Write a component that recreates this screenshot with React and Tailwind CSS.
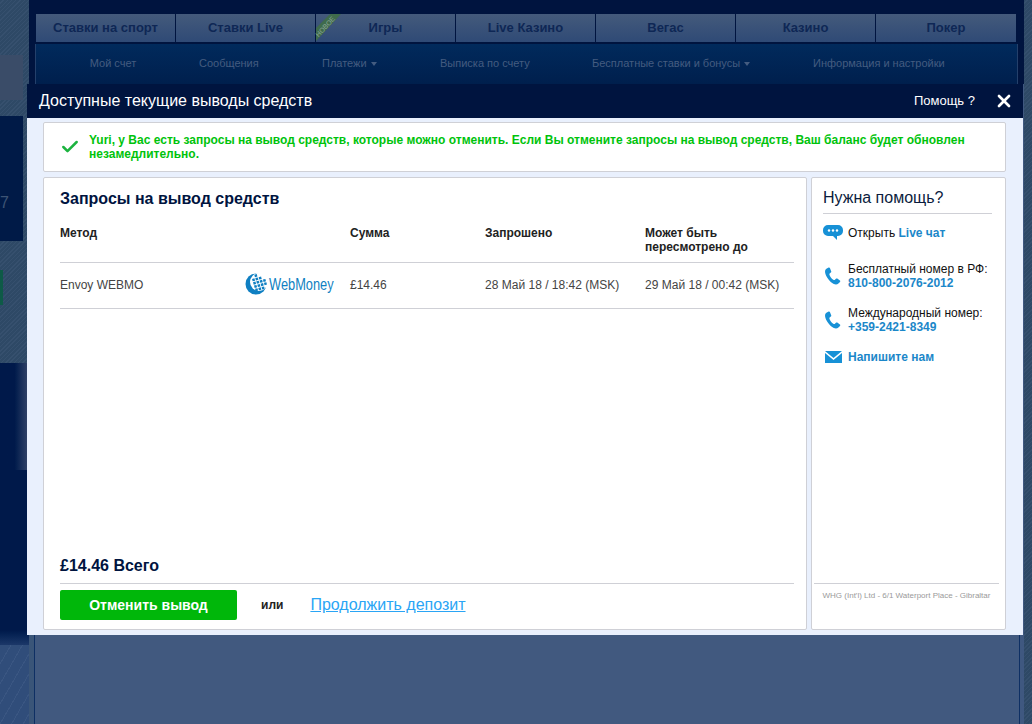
import { Check, X } from 'lucide-react';

const TABS = ['Ставки на спорт', 'Ставки Live', 'Игры', 'Live Казино', 'Вегас', 'Казино', 'Покер'];

const texture = 'bg-[repeating-linear-gradient(135deg,#2e4966_0px,#2e4966_2px,#36506e_2px,#36506e_3px)]';

function SubLink({ children, caret }) {
  return (
    <span className="flex items-center gap-1 text-[11px] text-[#445c80]">
      {children}
      {caret && <span className="mt-px border-x-[3.5px] border-t-[4px] border-x-transparent border-t-[#445c80]" />}
    </span>
  );
}

function LeftEdge() {
  return (
    <div className={`flex w-[29px] flex-col ${texture}`}>
      <div className="mt-[55px] h-[45px] w-[23px] bg-[#3a4c68]" />
      <div className="mt-[16px] flex h-[125px] w-[23px] items-start bg-[#001a47] pt-[78px] text-[16px] leading-[18px] text-[#3d5475]">7</div>
      <div className="h-[122px] pt-[29px]">
        <div className="h-[35px] w-[3px] bg-[#0e5a47]" />
      </div>
      <div className="h-[107px] bg-gradient-to-r from-[#00194a] via-[#00194a] to-[#36466a]" />
      <div className="h-[160px] bg-[#00194a]" />
      <div className="h-[15px] bg-gradient-to-b from-[#00194a] to-[#1c3869]" />
      <div className="flex-1 bg-[repeating-linear-gradient(120deg,#304d7a_0px,#304d7a_9px,#3a5682_9px,#3a5682_10px)]" />
    </div>
  );
}

function Background() {
  return (
    <div className="flex h-[724px] w-full">
      <LeftEdge />

      <div className="flex w-[995px] flex-col bg-[#00143f]">
        <div className="h-[14px]" />
        <div className="ml-[7px] flex h-[30px] w-[980px] border-b-2 border-[#00143f] bg-gradient-to-b from-[#445a7b] to-[#2f4a76]">
          {TABS.map((t, i) => (
            <div
              key={t}
              className="relative flex w-[140px] items-center justify-center border-r border-[#00143f] text-[13px] font-bold text-[#0e2755] last:border-r-0"
            >
              {i === 2 && (
                <>
                  <svg className="absolute top-0 left-0" width="26" height="28" viewBox="0 0 26 28">
                    <polygon points="0,14 14,0 25,0 0,27" fill="#3f6b4c" />
                  </svg>
                  <span className="absolute top-[8px] left-[-3px] -rotate-[47deg] text-[7px] leading-[10px] font-normal text-[#8aa596]">НОВОЕ</span>
                </>
              )}
              {t}
            </div>
          ))}
        </div>
        <div className="ml-[6px] flex h-[40px] w-[983px] items-center border-x border-[#24406b] bg-gradient-to-b from-[#012a5c] to-[#001f4d] pb-[2px]">
          <div className="flex w-[145px] justify-center pl-[9px]"><SubLink>Мой счет</SubLink></div>
          <div className="w-[83px] pl-[18px]"><SubLink>Сообщения</SubLink></div>
          <div className="w-[136px] pl-[58px]"><SubLink caret>Платежи</SubLink></div>
          <div className="w-[152px] pl-[40px]"><SubLink>Выписка по счету</SubLink></div>
          <div className="w-[221px] pl-[40px]"><SubLink caret>Бесплатные ставки и бонусы</SubLink></div>
          <div className="pl-[40px]"><SubLink>Информация и настройки</SubLink></div>
        </div>
        <div className="flex flex-1 bg-[#3a5578]">
          <div className="ml-[5px] flex-1 border-x border-[#0e2f63] bg-[#41597f]" />
          <div className="w-[4px] bg-[#3f5880]" />
        </div>
      </div>

      <div className={`flex-1 ${texture}`} />
    </div>
  );
}

function ChatIcon() {
  return (
    <svg width="20" height="15" viewBox="0 0 20 15" className="shrink-0">
      <path d="M5 0h10a5 5 0 0 1 5 5v1a5 5 0 0 1-5 5h-1v4l-4-4H5a5 5 0 0 1-5-5V5a5 5 0 0 1 5-5z" fill="#1791d6" />
      <circle cx="6" cy="5.5" r="1.2" fill="#fff" />
      <circle cx="10" cy="5.5" r="1.2" fill="#fff" />
      <circle cx="14" cy="5.5" r="1.2" fill="#fff" />
    </svg>
  );
}

function PhoneIcon() {
  return (
    <svg width="16" height="18" viewBox="0 0 16 18" className="shrink-0">
      <path d="M3.6 0.6 1.4 1.8C.2 2.6-.2 4 .2 6c.8 3.6 4.4 9 8.6 11 1.8.8 3.4.6 4.6-.4l1.6-1.6c.4-.4.4-1-.1-1.4l-2.6-2c-.4-.3-1-.3-1.4.1l-1.2 1.2c-.3.2-.7.3-1 .1C6.6 11.8 4.8 9 4.4 7.4c-.1-.4 0-.8.3-1l1.1-.8c.5-.4.6-1 .3-1.5L4.9 1C4.6.4 4.1.3 3.6.6z" fill="#1791d6" />
    </svg>
  );
}

function MailIcon() {
  return (
    <svg width="17" height="12" viewBox="0 0 17 12" className="shrink-0">
      <path d="M0 0h17L8.5 7z" fill="#1791d6" />
      <path d="M0 2v10h17V2L8.5 9z" fill="#1791d6" />
    </svg>
  );
}

function WebMoneyLogo() {
  const squares = [];
  for (let r = 0; r < 5; r++) {
    for (let c = 0; c < 5; c++) {
      const x = 7.5 + c * 3.3 + r * 1;
      const y = 2 + r * 3.3 - c * 0.9 + 1.5;
      if ((x - 11) ** 2 + (y - 11) ** 2 < 92 && x + y > 12) squares.push([x, y]);
    }
  }
  return (
    <svg width="92" height="24" viewBox="0 0 92 24" className="shrink-0">
      <circle cx="11" cy="12" r="10.5" fill="#0f7fc2" transform="translate(0 -1)" />
      <circle cx="14" cy="9" r="9" fill="#fff" />
      {squares.map(([x, y]) => (
        <rect key={`${x}-${y}`} x={x - 1.2} y={y - 1.2} width="2.5" height="2.5" fill="#0f7fc2" transform={`rotate(-15 ${x} ${y})`} />
      ))}
      <text transform="translate(24 17) scale(0.756 1)" fontFamily="'Liberation Sans', sans-serif" fontSize="17" fill="#0f7fc2">WebMoney</text>
    </svg>
  );
}

function Modal() {
  return (
    <div className="absolute top-[84px] left-[27px] flex h-[551px] w-[996px] flex-col bg-[#e9f0fd]">
      <div className="flex h-[34px] shrink-0 items-center bg-[#00143f] pr-[9px] pl-[12px] text-white">
        <span className="text-[16px]">Доступные текущие выводы средств</span>
        <span className="ml-auto text-[13px]">Помощь ?</span>
        <X className="ml-[19px]" size={20} strokeWidth={3.2} />
      </div>

      <div className="flex flex-1 flex-col gap-[5px] pt-[4px] pr-[17px] pb-[5px] pl-[16px]">
        <div className="flex h-[50px] shrink-0 items-center rounded-[2px] border border-[#cfd0d6] bg-white pr-[14px] pl-[16px]">
          <Check className="mr-[9px] shrink-0 text-[#1cb33f]" size={20} strokeWidth={3} />
          <p className="text-[12px] leading-[14px] font-bold text-[#00c30c]">
            Yuri, у Вас есть запросы на вывод средств, которые можно отменить. Если Вы отмените запросы на вывод средств, Ваш баланс будет обновлен незамедлительно.
          </p>
        </div>

        <div className="flex flex-1 gap-[4px]">
          <div className="flex w-[764px] flex-col rounded-[2px] border border-[#cfd0d6] bg-white pr-[12px] pb-[9px] pl-[16px]">
            <h2 className="mt-[12px] text-[16px] leading-[18px] font-bold text-[#00143f]">Запросы на вывод средств</h2>

            <div className="mt-[18px] flex h-[37px] border-b border-[#cfd0d6] text-[12px] leading-[14px] font-bold text-[#222]">
              <div className="w-[290px]">Метод</div>
              <div className="w-[135px]">Сумма</div>
              <div className="w-[160px]">Запрошено</div>
              <div>Может быть<br />пересмотрено до</div>
            </div>

            <div className="flex h-[46px] items-center border-b border-[#cfd0d6] pb-[2px] text-[12px] text-[#444]">
              <div className="w-[185px]">Envoy WEBMO</div>
              <div className="w-[105px]"><WebMoneyLogo /></div>
              <div className="w-[135px]">£14.46</div>
              <div className="w-[160px]">28 Май 18 / 18:42 (MSK)</div>
              <div>29 Май 18 / 00:42 (MSK)</div>
            </div>

            <div className="mt-auto border-b border-[#cfd0d6] pb-[8px] text-[16px] leading-[18px] font-bold text-[#00143f]">£14.46 Всего</div>

            <div className="mt-[6px] flex items-center">
              <button className="h-[30px] w-[177px] rounded-[2px] bg-[#00b70a] text-[14px] font-bold text-white">Отменить вывод</button>
              <span className="ml-[24px] text-[12px] font-bold text-[#222]">или</span>
              <a className="ml-[27px] text-[16px] text-[#2aa5f5] underline">Продолжить депозит</a>
            </div>
          </div>

          <div className="flex flex-1 flex-col rounded-[2px] border border-[#cfd0d6] bg-white pr-[6px] pb-[28px] pl-[2px]">
            <div className="mr-[7px] ml-[9px] flex h-[36px] items-end border-b border-[#cfd0d6] pb-[5px] text-[16px] leading-[20px] text-[#0b1c3d]">Нужна помощь?</div>

            <div className="mr-[5px] ml-[9px] flex flex-col text-[12px] leading-[14px] text-[#111]">
              <div className="mt-[11px] flex items-center gap-[5px]">
                <ChatIcon />
                <span>Открыть <span className="font-bold text-[#1b87c9]">Live чат</span></span>
              </div>
              <div className="mt-[22px] flex items-center gap-[7px] pl-[2px]">
                <PhoneIcon />
                <div>Бесплатный номер в РФ:<br /><span className="font-bold text-[#1b87c9]">810-800-2076-2012</span></div>
              </div>
              <div className="mt-[16px] flex items-center gap-[7px] pl-[2px]">
                <PhoneIcon />
                <div>Международный номер:<br /><span className="font-bold text-[#1b87c9]">+359-2421-8349</span></div>
              </div>
              <div className="mt-[16px] flex items-center gap-[6px] pl-[2px]">
                <MailIcon />
                <span className="font-bold text-[#1b87c9]">Напишите нам</span>
              </div>
            </div>

            <div className="mt-auto border-t border-[#cfd0d6] pt-[6px] text-center text-[8px] leading-[11px] text-[#9a9a9a]">
              WHG (Int'l) Ltd - 6/1 Waterport Place - Gibraltar
            </div>
          </div>
        </div>
      </div>
    </div>
  );
}

export default function App() {
  return (
    <div className="relative h-[724px] overflow-hidden font-['Liberation_Sans',Arial,sans-serif]">
      <Background />
      <Modal />
    </div>
  );
}
